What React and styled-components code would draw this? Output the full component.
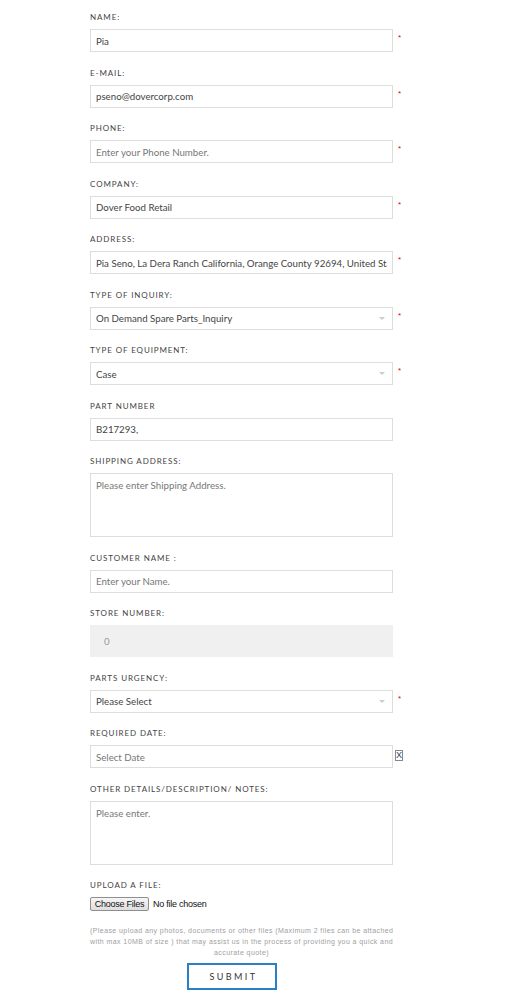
import React from "react";
import styled, { createGlobalStyle } from "styled-components";

const GlobalStyle = createGlobalStyle`
  html, body {
    margin: 0;
    padding: 0;
    background: #fff;
  }
  body {
    font-family: Lato, "Open Sans", sans-serif;
    color: #444;
  }
`;

const Page = styled.div`
  width: 514px;
  padding: 11px 0 10px 90px;
  box-sizing: border-box;
`;

const Form = styled.form`
  width: 320px;
`;

const Field = styled.div`
  margin-bottom: 14.5px;
`;

const Label = styled.label`
  display: block;
  height: 12px;
  line-height: 12px;
  margin-bottom: 6px;
  font-size: 8px;
  font-weight: 400;
  letter-spacing: 0.9px;
  color: #444;
  text-transform: uppercase;
`;

const Row = styled.div`
  display: flex;
  align-items: flex-start;
`;

const Control = styled.div`
  width: 303px;
  flex: none;
`;

const Input = styled.input`
  display: block;
  width: 100%;
  height: ${(p) => (p.$tall ? "32px" : "23px")};
  box-sizing: border-box;
  padding: 0 5px 0 ${(p) => (p.readOnly ? "13px" : "5px")};
  border: 1px solid ${(p) => (p.readOnly ? "#f0f0f0" : "#ddd")};
  background: ${(p) => (p.readOnly ? "#f0f0f0" : "#fff")};
  font-family: Lato, "Open Sans", sans-serif;
  font-size: 9.7px;
  color: ${(p) => (p.readOnly ? "#999" : "#444")};
  outline: none;
  &::placeholder {
    color: #777;
    opacity: 1;
  }
`;

const Select = styled.div`
  height: 23px;
  box-sizing: border-box;
  border: 1px solid #ddd;
  padding: 0 5px;
  display: flex;
  align-items: center;
  justify-content: space-between;
  font-size: 9.7px;
  color: #444;
  background: #fff;
`;

const Caret = styled.span`
  width: 0;
  height: 0;
  margin-right: 2px;
  border-left: 3px solid transparent;
  border-right: 3px solid transparent;
  border-top: 3px solid #ccc;
`;

const TextArea = styled.textarea`
  display: block;
  width: 100%;
  height: 64px;
  box-sizing: border-box;
  padding: 5px 5px;
  border: 1px solid #ddd;
  resize: none;
  font-family: Lato, "Open Sans", sans-serif;
  font-size: 9.7px;
  color: #444;
  outline: none;
  &::placeholder {
    color: #777;
    opacity: 1;
  }
`;

const Required = styled.span`
  margin: 5px 0 0 5px;
  font-family: "Liberation Sans", Arial, sans-serif;
  font-size: 8px;
  line-height: 8px;
  color: #e0001b;
`;

const Clear = styled.span`
  margin: 5px 0 0 2px;
  width: 8px;
  height: 11px;
  box-sizing: border-box;
  border: 1px solid #888;
  display: flex;
  align-items: center;
  justify-content: center;
  font-family: "Liberation Sans", Arial, sans-serif;
  font-size: 9px;
  line-height: 9px;
  color: #2f3a6b;
`;

const FileRow = styled.div`
  display: flex;
  align-items: center;
  gap: 4px;
  font-family: "Liberation Sans", Arial, sans-serif;
  font-size: 9px;
  letter-spacing: -0.25px;
  color: #111;
`;

const FileButton = styled.span`
  width: 59px;
  height: 14px;
  box-sizing: border-box;
  border: 1px solid #8f8f8f;
  border-radius: 2px;
  background: linear-gradient(#f6f6f6, #dedede);
  display: flex;
  align-items: center;
  justify-content: center;
`;

const Note = styled.p`
  width: 303px;
  margin: 14px 0 5px;
  font-family: "Liberation Sans", Arial, sans-serif;
  font-size: 7px;
  line-height: 11px;
  letter-spacing: 0.42px;
  color: #a0a0a0;
  text-align: center;
  white-space: nowrap;
`;

const Submit = styled.button`
  display: block;
  width: 90px;
  height: 27px;
  margin-left: 97px;
  border: 2px solid #2b7fc3;
  background: #fff;
  font-family: Lato, "Open Sans", sans-serif;
  font-size: 9px;
  letter-spacing: 2.4px;
  color: #333;
  padding: 0 0 0 3px;
`;

const fields = [
  { label: "Name:", value: "Pia", required: true },
  { label: "E-mail:", value: "pseno@dovercorp.com", required: true },
  { label: "Phone:", placeholder: "Enter your Phone Number.", required: true },
  { label: "Company:", value: "Dover Food Retail", required: true },
  {
    label: "Address:",
    value: "Pia Seno, La Dera Ranch California, Orange County 92694, United States",
    required: true,
  },
  { label: "Type of inquiry:", select: "On Demand Spare Parts_Inquiry", required: true },
  { label: "Type of equipment:", select: "Case", required: true },
  { label: "Part Number", value: "B217293," },
  { label: "Shipping Address:", area: "Please enter Shipping Address." },
  { label: "Customer Name :", placeholder: "Enter your Name." },
  { label: "Store Number:", value: "0", readOnly: true },
  { label: "Parts Urgency:", select: "Please Select", required: true },
  { label: "Required Date:", placeholder: "Select Date", clear: true },
  { label: "Other Details/Description/ Notes:", area: "Please enter." },
];

const renderControl = (f) => {
  if (f.select) {
    return (
      <Select>
        <span>{f.select}</span>
        <Caret />
      </Select>
    );
  }
  if (f.area) return <TextArea placeholder={f.area} />;
  return (
    <Input
      defaultValue={f.value}
      placeholder={f.placeholder}
      readOnly={f.readOnly}
      $tall={f.readOnly}
    />
  );
};

const App = () => (
  <Page>
    <GlobalStyle />
    <Form onSubmit={(e) => e.preventDefault()}>
      {fields.map((f) => (
        <Field key={f.label}>
          <Label>{f.label}</Label>
          <Row>
            <Control>{renderControl(f)}</Control>
            {f.required && <Required>*</Required>}
            {f.clear && <Clear>X</Clear>}
          </Row>
        </Field>
      ))}
      <Field>
        <Label>Upload a file:</Label>
        <FileRow>
          <FileButton>Choose Files</FileButton>
          <span>No file chosen</span>
        </FileRow>
        <Note>
          (Please upload any photos, documents or other files (Maximum 2 files can be attached
          <br />
          with max 10MB of size ) that may assist us in the process of providing you a quick and
          <br />
          accurate quote)
        </Note>
        <Submit type="submit">SUBMIT</Submit>
      </Field>
    </Form>
  </Page>
);

export default App;
